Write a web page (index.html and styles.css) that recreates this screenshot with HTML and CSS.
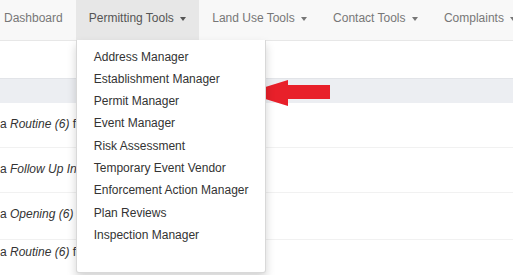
FILE: index.html
```html
<!DOCTYPE html>
<html lang="en">
<head>
    <meta charset="UTF-8">
    <title>Permitting Tools</title>
    <link rel="stylesheet" href="styles.css">
</head>
<body>
    <nav class="navbar">
        <a href="#" class="nav-item first">Dashboard</a>
        <div class="nav-item open">
            Permitting Tools <span class="caret"></span>
            <ul class="dropdown-menu">
                <li><a href="#">Address Manager</a></li>
                <li><a href="#">Establishment Manager</a></li>
                <li><a href="#">Permit Manager</a></li>
                <li><a href="#">Event Manager</a></li>
                <li><a href="#">Risk Assessment</a></li>
                <li><a href="#">Temporary Event Vendor</a></li>
                <li><a href="#">Enforcement Action Manager</a></li>
                <li><a href="#">Plan Reviews</a></li>
                <li><a href="#">Inspection Manager</a></li>
            </ul>
        </div>
        <a href="#" class="nav-item">Land Use Tools <span class="caret"></span></a>
        <a href="#" class="nav-item">Contact Tools <span class="caret"></span></a>
        <a href="#" class="nav-item">Complaints <span class="caret"></span></a>
    </nav>

    <div class="toolbar"></div>

    <div class="table">
        <div class="table-head"></div>
        <div class="row r1"><span class="cell">a <em>Routine (6)</em> for</span></div>
        <div class="row r2"><span class="cell">a <em>Follow Up Insp</em></span></div>
        <div class="row r3"><span class="cell">a <em>Opening (6)</em> for</span></div>
        <div class="row r4"><span class="cell">a <em>Routine (6)</em> for</span></div>
    </div>

    <!-- seta vermelha apontando pro menu -->
    <svg class="arrow" width="86" height="30" viewBox="0 0 86 30">
        <polygon points="0,14 42,1 42,6 84,6 84,20 42,20 42,27" fill="#e8202a"/>
    </svg>
</body>
</html>
```

FILE: styles.css
```css
:root {
    --nav-bg: #f8f8f8;
    --nav-border: #e7e7e7;
    --nav-text: #777;
    --text-color: #333;
}
body, html {
    margin: 0;
    padding: 0;
    font-family: 'Liberation Sans', Arial, sans-serif;
    font-size: 12px;
    color: var(--text-color);
    background: #fff;
    overflow: hidden;
}
.navbar {
    display: flex;
    background-color: var(--nav-bg);
    border-bottom: 1px solid var(--nav-border);
    height: 40px;
    white-space: nowrap;
}
.nav-item {
    position: relative;
    display: block;
    padding: 10px 13px 13px;
    line-height: 17px;
    color: var(--nav-text);
    text-decoration: none;
}
.nav-item.first {
    padding-left: 4px;
}
.nav-item.open {
    background-color: #e7e7e7;
    color: #555;
}
.caret {
    display: inline-block;
    width: 0;
    height: 0;
    margin-left: 3px;
    vertical-align: middle;
    border-top: 4px solid;
    border-left: 3.5px solid transparent;
    border-right: 3.5px solid transparent;
}
.dropdown-menu {
    position: absolute;
    top: 40px;
    left: 0;
    z-index: 1000;
    margin: 0;
    padding: 6px 0 25px;
    list-style: none;
    background: #fff;
    border: 1px solid rgba(0,0,0,0.15);
    border-top: 0;
    border-radius: 0 0 3px 3px;
    box-shadow: 0 5px 10px rgba(0,0,0,0.175);
}
.dropdown-menu a {
    display: block;
    padding: 2.65px 17px 2.65px 17px;
    line-height: 17px;
    color: var(--text-color);
    text-decoration: none;
}
.toolbar {
    height: 37px;
}
.table-head {
    height: 24px;
    background: #eceef2;
    border-top: 1px solid #e2e4e8;
}
.row {
    box-sizing: border-box;
    padding-top: 14px;
    border-bottom: 1px solid #f1f1f1;
    white-space: nowrap;
}
.cell {
    display: block;
    width: 76px;
    overflow: hidden;
}
.r1 { height: 45px; }
.r2 { height: 45px; }
.r3 { height: 47px; }
.r4 { height: 40px; padding-top: 5px; }
.arrow {
    position: absolute;
    left: 246px;
    top: 79px;
}
```
